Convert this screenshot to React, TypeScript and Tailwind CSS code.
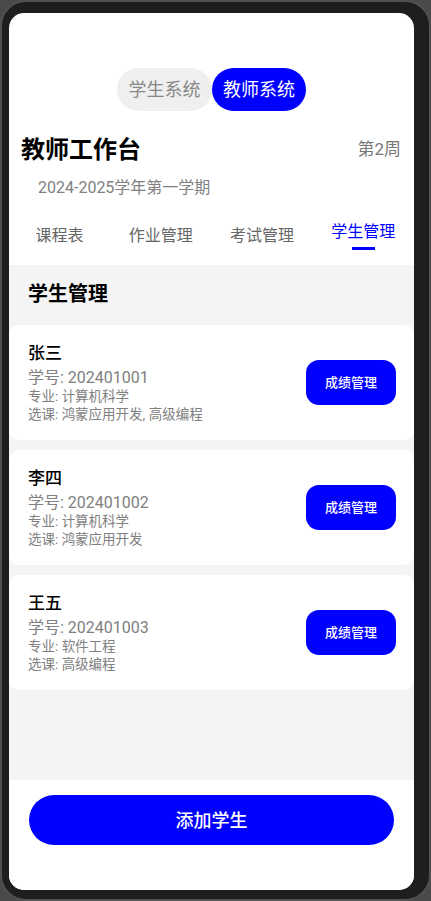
import React, { useState } from 'react';

const FONT = { fontFamily: 'Roboto, "Noto Sans CJK SC", "Noto Sans", sans-serif' };

interface Student {
  name: string;
  id: string;
  major: string;
  courses: string;
}

const STUDENTS: Student[] = [
  { name: '张三', id: '202401001', major: '计算机科学', courses: '鸿蒙应用开发, 高级编程' },
  { name: '李四', id: '202401002', major: '计算机科学', courses: '鸿蒙应用开发' },
  { name: '王五', id: '202401003', major: '软件工程', courses: '高级编程' },
];

const TABS = ['课程表', '作业管理', '考试管理', '学生管理'];

const StudentCard = ({ s }: { s: Student }) => (
  <div className="h-[115px] bg-white rounded-[10px] flex items-center pl-[19px] pr-[18px]">
    <div className="flex-1 flex flex-col">
      <span className="text-[17px] leading-[22px] font-medium text-black">{s.name}</span>
      <span className="mt-[5px] text-[16px] leading-[18px] text-[#808080]">学号: {s.id}</span>
      <span className="text-[13.5px] leading-[18px] text-[#808080]">专业: {s.major}</span>
      <span className="text-[13.5px] leading-[18px] text-[#808080]">选课: {s.courses}</span>
    </div>
    <button className="w-[90px] h-[45px] rounded-[13px] bg-[#0000ff] text-white text-[13px] font-medium">
      成绩管理
    </button>
  </div>
);

export default function App() {
  const [tab, setTab] = useState(3);
  const [mode, setMode] = useState<'student' | 'teacher'>('teacher');

  return (
    <div className="w-[431px] h-[901px] bg-[#4a4a4a] overflow-hidden" style={FONT}>
      <div className="w-full h-full rounded-[26px] border-2 border-[#505050] bg-[#1e1e1e] pl-[7px] pt-[11px] pr-[15px] pb-[9px]">
        <div className="w-[405px] h-[877px] bg-white rounded-[15px] overflow-hidden flex flex-col">
          {/* header */}
          <div className="flex justify-center pt-[55px]">
            <button
              onClick={() => setMode('student')}
              className={`h-[43px] w-[95px] rounded-full text-[18px] ${mode === 'student' ? 'bg-[#0000ff] text-white' : 'bg-[#efefef] text-[#888888]'}`}
            >
              学生系统
            </button>
            <button
              onClick={() => setMode('teacher')}
              className={`h-[43px] w-[94px] rounded-full text-[18px] ${mode === 'teacher' ? 'bg-[#0000ff] text-white' : 'bg-[#efefef] text-[#888888]'}`}
            >
              教师系统
            </button>
          </div>

          <div className="mt-[23px] flex items-center justify-between pl-[12px] pr-[13px] h-[32px]">
            <span className="text-[24px] font-bold text-black leading-[32px]">教师工作台</span>
            <span className="text-[17px] text-[#777777]">第2周</span>
          </div>

          <div className="mt-[10px] pl-[29px] text-[16px] leading-[24px] text-[#808080]">2024-2025学年第一学期</div>

          <div className="mt-[13px] flex h-[52px]">
            {TABS.map((t, i) => (
              <button
                key={t}
                onClick={() => setTab(i)}
                className={`flex-1 flex flex-col items-center ${i === tab ? 'pt-[8px]' : 'pt-[12px]'}`}
              >
                <span className={`text-[16px] leading-[22px] ${i === tab ? 'text-[#0000ff]' : 'text-[#666666]'}`}>{t}</span>
                {i === tab && <span className="mt-[4px] w-[23px] h-[3px] bg-[#0000ff]" />}
              </button>
            ))}
          </div>

          {/* content */}
          <div className="flex-1 bg-[#f4f4f4] flex flex-col pt-[15px]">
            <div className="pl-[19px] text-[20px] leading-[28px] font-bold text-black">学生管理</div>
            <div className="mt-[17px] flex flex-col gap-[10px]">
              {STUDENTS.map((s) => (
                <StudentCard key={s.id} s={s} />
              ))}
            </div>
          </div>

          {/* footer */}
          <div className="h-[110px] bg-white px-[20px] pt-[15px]">
            <button className="w-full h-[50px] rounded-full bg-[#0000ff] text-white text-[18px] font-medium">
              添加学生
            </button>
          </div>
        </div>
      </div>
    </div>
  );
}
